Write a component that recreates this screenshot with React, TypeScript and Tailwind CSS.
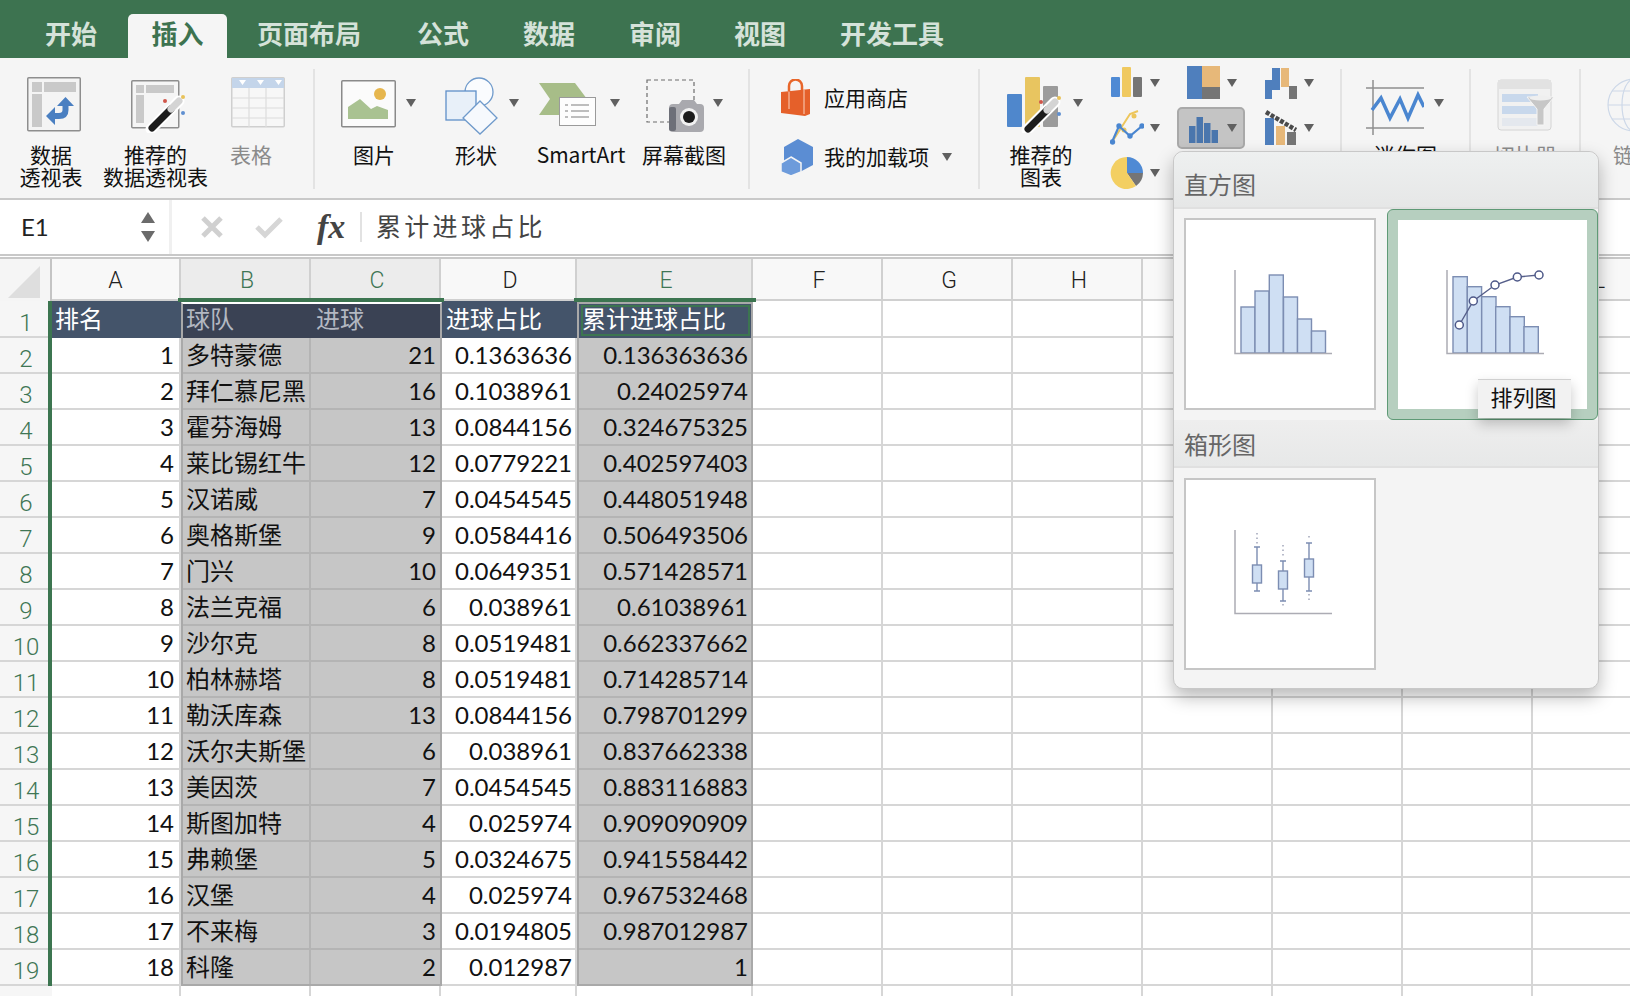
import React from "react";

// Excel for Mac: 插入 ribbon with the 直方图 chart menu open

const CJK = "font-['Noto_Sans_CJK_SC',sans-serif]";
const CELL_FONT = "font-['Lato','Noto_Sans_CJK_SC',sans-serif]";

const rows: [string, number, string, string][] = [
  ["多特蒙德", 21, "0.1363636", "0.136363636"],
  ["拜仁慕尼黑", 16, "0.1038961", "0.24025974"],
  ["霍芬海姆", 13, "0.0844156", "0.324675325"],
  ["莱比锡红牛", 12, "0.0779221", "0.402597403"],
  ["汉诺威", 7, "0.0454545", "0.448051948"],
  ["奥格斯堡", 9, "0.0584416", "0.506493506"],
  ["门兴", 10, "0.0649351", "0.571428571"],
  ["法兰克福", 6, "0.038961", "0.61038961"],
  ["沙尔克", 8, "0.0519481", "0.662337662"],
  ["柏林赫塔", 8, "0.0519481", "0.714285714"],
  ["勒沃库森", 13, "0.0844156", "0.798701299"],
  ["沃尔夫斯堡", 6, "0.038961", "0.837662338"],
  ["美因茨", 7, "0.0454545", "0.883116883"],
  ["斯图加特", 4, "0.025974", "0.909090909"],
  ["弗赖堡", 5, "0.0324675", "0.941558442"],
  ["汉堡", 4, "0.025974", "0.967532468"],
  ["不来梅", 3, "0.0194805", "0.987012987"],
  ["科隆", 2, "0.012987", "1"],
];

function Caret({ className = "" }: { className?: string }) {
  return (
    <svg width="10" height="8" viewBox="0 0 10 8" className={`shrink-0 ${className}`}>
      <path d="M0 0h10L5 8z" fill="#606060" />
    </svg>
  );
}

function Wand({ x, y }: { x: number; y: number }) {
  return (
    <g transform={`translate(${x} ${y})`}>
      <path d="M2 32 L30 4" stroke="#fff" strokeWidth="11" strokeLinecap="round" />
      <path d="M3 31 L22 12" stroke="#1d1d1d" strokeWidth="7" strokeLinecap="round" />
      <path d="M22 12 L30 4" stroke="#d4d4d4" strokeWidth="7" strokeLinecap="round" />
      <circle cx="16" cy="4" r="2" fill="#d0564a" />
      <circle cx="34" cy="0" r="2" fill="#e8c25a" />
      <circle cx="34" cy="16" r="2" fill="#5f8fd0" />
    </g>
  );
}

const PivotIcon = () => (
  <svg width="54" height="56" viewBox="0 0 54 56">
    <rect x="0.75" y="0.75" width="52.5" height="53" rx="1" fill="#f4f4f4" stroke="#8e8e8e" strokeWidth="1.5" />
    <rect x="5" y="5" width="10" height="10" fill="#c9c9c9" />
    <rect x="17" y="5" width="32" height="10" fill="#c9c9c9" />
    <rect x="5" y="17" width="10" height="33" fill="#c9c9c9" />
    <path d="M38.5 26V33Q38.5 39 32 39H26" fill="none" stroke="#4a7fc1" strokeWidth="6" />
    <path d="M30 29L38.5 20L47 29zM28 30L19 39L28 48z" fill="#4a7fc1" />
  </svg>
);

const RecPivotIcon = () => (
  <svg width="56" height="56" viewBox="0 0 56 56">
    <rect x="0.75" y="3.75" width="47" height="47" rx="1" fill="#f5f5f5" stroke="#8e8e8e" strokeWidth="1.5" />
    <rect x="5" y="8" width="8" height="8" fill="#c9c9c9" />
    <rect x="15" y="8" width="28" height="8" fill="#c9c9c9" />
    <rect x="5" y="18" width="8" height="28" fill="#c9c9c9" />
    <Wand x={18} y={20} />
  </svg>
);

const TableIcon = () => (
  <svg width="54" height="52" viewBox="0 0 54 52">
    <rect x="0.75" y="0.75" width="52.5" height="49" rx="1" fill="#f7f7f7" stroke="#cfcfcf" strokeWidth="1.5" />
    <rect x="1" y="1" width="52" height="10" fill="#c4d5ea" />
    <path d="M1 21H53M1 31H53M1 41H53M18 11V50M35 11V50" stroke="#dcdcdc" strokeWidth="1.2" />
    <path d="M8 3h7l-3.5 5zM26 3h7l-3.5 5zM44 3h7l-3.5 5z" fill="#fff" />
  </svg>
);

const PictureIcon = () => (
  <svg width="55" height="50" viewBox="0 0 55 50">
    <rect x="0.75" y="0.75" width="53.5" height="46" rx="1" fill="#fbfbfb" stroke="#8a8a8a" strokeWidth="1.5" />
    <circle cx="39" cy="14" r="6" fill="#e6b64e" />
    <path d="M7 39V27L19 19L30 29L36 26L47 30V39z" fill="#a9c291" />
  </svg>
);

const ShapeIcon = () => (
  <svg width="54" height="58" viewBox="0 0 54 58">
    <circle cx="34" cy="15" r="14" fill="#fafcfe" stroke="#6f9acb" strokeWidth="1.3" />
    <rect x="1" y="14" width="30" height="29" fill="#e8f0f9" stroke="#5f8fc8" strokeWidth="1.3" />
    <path d="M35 24L52 41L35 57L18 41z" fill="#f6f9fd" stroke="#6f9acb" strokeWidth="1.3" />
  </svg>
);

const SmartArtIcon = () => (
  <svg width="57" height="48" viewBox="0 0 57 48">
    <path d="M0 0H36L48 16L36 32H0L11 16z" fill="#a7bd88" />
    <rect x="20.5" y="14.5" width="36" height="28" fill="#fdfdfd" stroke="#9a9a9a" />
    <path d="M26 22h3M32 22h18M26 28h3M32 28h18M26 34h3M32 34h18" stroke="#a8a8a8" strokeWidth="1.6" />
  </svg>
);

const ScreenshotIcon = () => (
  <svg width="61" height="56" viewBox="0 0 61 56">
    <rect x="1" y="1" width="47" height="42" fill="none" stroke="#6d6d6d" strokeWidth="1.2" strokeDasharray="4 3" />
    <path d="M23 29q0-4 4-4h6l3-4h12l3 4h3q4 0 4 4v20q0 4-4 4H27q-4 0-4-4z" fill="#a9a9ae" />
    <rect x="23" y="28" width="7" height="24" rx="2" fill="#6d6f78" />
    <circle cx="43" cy="38" r="9" fill="#f1f1f1" />
    <circle cx="43" cy="38" r="6" fill="#1b1b1b" />
  </svg>
);

const StoreIcon = () => (
  <svg width="31" height="38" viewBox="0 0 31 38">
    <path d="M9 12V7a6.500 6.500 0 0 1 13 0v5" fill="none" stroke="#e8662a" strokeWidth="2.500" />
    <path d="M1 13L30 10V35L25 37L1 34z" fill="#e5602a" />
    <path d="M9 13V30M24 11V35" stroke="#fbd2bd" strokeWidth="1" />
  </svg>
);

const AddinIcon = () => (
  <svg width="34" height="37" viewBox="0 0 34 37">
    <path d="M18 0L33 8V26L18 34L4 26V8z" fill="#5b8dd3" />
    <path d="M11 18L21 24V33L11 37L1 33V24z" fill="#6d9bdb" stroke="#f5f5f5" strokeWidth="1.5" />
  </svg>
);

const RecChartIcon = () => (
  <svg width="60" height="56" viewBox="0 0 60 56">
    <rect x="0" y="17" width="15" height="33" rx="1" fill="#4f87cc" />
    <rect x="18" y="0" width="15" height="50" rx="1" fill="#e8c560" />
    <rect x="36" y="9" width="15" height="41" rx="1" fill="#9b9b9b" />
    <Wand x={18} y={21} />
  </svg>
);

const ColumnIcon = () => (
  <svg width="34" height="34" viewBox="0 0 34 34">
    <rect x="1" y="11" width="9" height="20" rx="1" fill="#4f8ad4" />
    <rect x="12" y="1" width="9" height="30" rx="1" fill="#f0c95f" />
    <rect x="23" y="11" width="9" height="20" rx="1" fill="#757575" />
  </svg>
);

const ScatterIcon = () => (
  <svg width="34" height="36" viewBox="0 0 34 36">
    <path d="M2 32L20 4L28 1" fill="none" stroke="#edc65c" strokeWidth="2" />
    <circle cx="14" cy="20" r="2.500" fill="#edc65c" />
    <circle cx="24" cy="6" r="2.500" fill="#edc65c" />
    <path d="M2 32L9 16L20 26L32 16" fill="none" stroke="#4a86d0" strokeWidth="2.200" />
    <circle cx="2.500" cy="32" r="2.700" fill="#4a86d0" />
    <circle cx="9" cy="16" r="2.700" fill="#4a86d0" />
    <circle cx="20" cy="26" r="2.700" fill="#4a86d0" />
    <circle cx="32" cy="16" r="2.700" fill="#4a86d0" />
  </svg>
);

const PieIcon = () => (
  <svg width="34" height="36" viewBox="0 0 34 36">
    <path d="M17 18V2A16 16 0 0 1 33 18z" fill="#4f8ad4" />
    <path d="M17 18H33A16 16 0 0 1 26 31z" fill="#757575" />
    <path d="M17 18L26 31A16 16 0 1 1 17 2z" fill="#f3cf62" />
  </svg>
);

const TreemapIcon = () => (
  <svg width="34" height="34" viewBox="0 0 34 34">
    <rect x="0" y="0" width="15" height="33" fill="#4f7fbd" />
    <rect x="15" y="0" width="18" height="21" fill="#e7b879" />
    <rect x="15" y="21" width="18" height="12" fill="#757575" />
  </svg>
);

const WaterfallIcon = () => (
  <svg width="34" height="34" viewBox="0 0 34 34">
    <rect x="1" y="14" width="7" height="19" fill="#4f7fbd" />
    <rect x="8" y="2" width="8" height="22" fill="#4f7fbd" />
    <rect x="17" y="2" width="8" height="19" fill="#e7b879" />
    <rect x="25" y="20" width="8" height="13" fill="#757575" />
  </svg>
);

const HistogramIcon = () => (
  <svg width="34" height="34" viewBox="0 0 34 34">
    <rect x="2" y="15" width="6.500" height="17" fill="#4a76ad" />
    <rect x="9.500" y="6" width="6.500" height="26" fill="#4a76ad" />
    <rect x="17" y="12" width="6.500" height="20" fill="#4a76ad" />
    <rect x="24.500" y="19" width="6.500" height="13" fill="#4a76ad" />
  </svg>
);

const ParetoIcon = () => (
  <svg width="34" height="36" viewBox="0 0 34 36">
    <rect x="1" y="8" width="9" height="27" fill="#4f7fbd" />
    <rect x="12" y="16" width="9" height="19" fill="#e7b879" />
    <rect x="23" y="22" width="9" height="13" fill="#757575" />
    <path d="M2 2L32 20" stroke="#4a4a4a" strokeWidth="4.500" strokeDasharray="4 1.500" />
  </svg>
);

const SparklineIcon = () => (
  <svg width="58" height="56" viewBox="0 0 58 56">
    <path d="M7 1V56M0 9H58M0 49H58" stroke="#8f8f8f" strokeWidth="1.500" />
    <path d="M6 31L15 19L24 39L34 20L42 39L52 16L58 28" fill="none" stroke="#4a86d0" strokeWidth="3.500" />
  </svg>
);

const SlicerIcon = () => (
  <svg width="58" height="54" viewBox="0 0 58 54">
    <rect x="1" y="1" width="53" height="50" rx="3" fill="#f1f1f1" stroke="#d4d4d4" />
    <rect x="1" y="1" width="53" height="9" fill="#e2e2e2" />
    <rect x="5" y="15" width="36" height="8" fill="#c8d8ec" />
    <rect x="5" y="27" width="36" height="8" fill="#c8d8ec" />
    <rect x="5" y="39" width="36" height="8" fill="#e4e8ee" />
    <path d="M30 18H57L47 30V46L40 46V30z" fill="#c7c7c7" stroke="#f5f5f5" />
    <ellipse cx="43.500" cy="19" rx="11" ry="2.500" fill="#efefef" />
  </svg>
);

const GlobeIcon = () => (
  <svg width="46" height="56" viewBox="0 0 46 56">
    <g fill="none" stroke="#cdd8e8" strokeWidth="1.200">
      <circle cx="28" cy="28" r="26" />
      <ellipse cx="28" cy="28" rx="12" ry="26" />
      <path d="M2 28H54M6 14H50M6 42H50" />
    </g>
  </svg>
);

function Tool({
  width,
  icon,
  caret,
  label,
  gray,
}: {
  width: string;
  icon: React.ReactNode;
  caret?: string;
  label: string[];
  gray?: boolean;
}) {
  return (
    <div className={`flex shrink-0 flex-col items-center pt-[19px] ${width}`}>
      <div className="flex h-[66px] w-full items-start">
        {icon}
        {caret && <Caret className={caret} />}
      </div>
      <div className={`whitespace-nowrap text-center text-[21px] leading-[22px] ${gray ? "text-[#8b8b8b]" : "text-[#111]"}`}>
        {label.map((l) => (
          <div key={l}>{l}</div>
        ))}
      </div>
    </div>
  );
}

function Sep() {
  return <div className="mt-[11px] h-[120px] w-[2px] shrink-0 bg-[#e3e3e3]" />;
}

function SmallBtn({ icon, selected }: { icon: React.ReactNode; selected?: boolean }) {
  return (
    <div
      className={`flex h-[42px] w-[68px] items-center rounded-[5px] border-2 pl-[8px] ${
        selected ? "border-[#a9a9a9] bg-[#c4c4c4]" : "border-transparent"
      }`}
    >
      {icon}
      <Caret className="ml-[6px]" />
    </div>
  );
}

function Ribbon() {
  return (
    <div className={`flex h-[142px] border-b-2 border-[#c9c9c9] bg-[#f5f5f5] ${CJK}`}>
      <Tool width="w-[102px]" icon={<div className="pl-[27px]"><PivotIcon /></div>} label={["数据", "透视表"]} />
      <Tool width="w-[107px]" icon={<div className="pl-[29px]"><RecPivotIcon /></div>} label={["推荐的", "数据透视表"]} />
      <Tool width="w-[84px]" icon={<div className="pl-[22px]"><TableIcon /></div>} label={["表格"]} gray />
      <div className="w-[20px] shrink-0" />
      <Sep />
      <Tool width="w-[118px]" icon={<div className="pl-[26px] pt-[3px]"><PictureIcon /></div>} caret="ml-[10px] mt-[22px]" label={["图片"]} />
      <Tool width="w-[86px]" icon={<div className="pl-[12px]"><ShapeIcon /></div>} caret="ml-[10px] mt-[22px]" label={["形状"]} />
      <Tool width="w-[124px]" icon={<div className="pl-[20px] pt-[6px]"><SmartArtIcon /></div>} caret="ml-[14px] mt-[22px]" label={["SmartArt"]} />
      <Tool width="w-[82px]" icon={<div className="pl-[3px] pt-[2px]"><ScreenshotIcon /></div>} caret="ml-[6px] mt-[22px]" label={["屏幕截图"]} />
      <div className="w-[23px] shrink-0" />
      <Sep />
      <div className="flex w-[228px] shrink-0 flex-col gap-[21px] pl-[30px] pt-[21px] text-[21px] text-[#111]">
        <div className="flex h-[38px] items-center">
          <div className="w-[44px]"><StoreIcon /></div>
          <span>应用商店</span>
        </div>
        <div className="flex h-[38px] items-center">
          <div className="w-[44px]"><AddinIcon /></div>
          <span>我的加载项</span>
          <Caret className="ml-[13px]" />
        </div>
      </div>
      <Sep />
      <Tool width="w-[122px]" icon={<div className="pl-[27px]"><RecChartIcon /></div>} caret="ml-[6px] mt-[22px]" label={["推荐的", "图表"]} />
      <div className="-ml-[2px] flex shrink-0 gap-[9px] pt-[4px]">
        <div className="flex flex-col gap-[3px]">
          <SmallBtn icon={<ColumnIcon />} />
          <SmallBtn icon={<ScatterIcon />} />
          <SmallBtn icon={<PieIcon />} />
        </div>
        <div className="flex flex-col gap-[3px]">
          <SmallBtn icon={<TreemapIcon />} />
          <SmallBtn icon={<HistogramIcon />} selected />
        </div>
        <div className="flex flex-col gap-[3px]">
          <SmallBtn icon={<WaterfallIcon />} />
          <SmallBtn icon={<ParetoIcon />} />
        </div>
      </div>
      <div className="w-[18px] shrink-0" />
      <Sep />
      <Tool width="w-[127px]" icon={<div className="pl-[24px] pt-[2px]"><SparklineIcon /></div>} caret="ml-[10px] mt-[22px]" label={["迷你图"]} />
      <Sep />
      <Tool width="w-[108px]" icon={<div className="pl-[26px] pt-[2px]"><SlicerIcon /></div>} label={["切片器"]} gray />
      <Sep />
      <Tool width="w-[106px]" icon={<div className="pl-[25px]"><GlobeIcon /></div>} label={["链接"]} gray />
    </div>
  );
}

function FormulaBar() {
  return (
    <div className="flex h-[54px] bg-[#f0f0f0]">
      <div className="flex w-[169px] items-center justify-between bg-white pl-[21px] pr-[14px]">
        <span className={`text-[24px] text-[#222] ${CELL_FONT}`}>E1</span>
        <div className="flex flex-col gap-[8px]">
          <svg width="14" height="11" viewBox="0 0 14 11"><path d="M7 0l7 11H0z" fill="#6b6b6b" /></svg>
          <svg width="14" height="11" viewBox="0 0 14 11"><path d="M0 0h14L7 11z" fill="#6b6b6b" /></svg>
        </div>
      </div>
      <div className="ml-[3px] flex flex-1 items-center bg-white pl-[28px]">
        <svg width="24" height="24" viewBox="0 0 24 24"><path d="M3 3L21 21M21 3L3 21" stroke="#d0d0d0" strokeWidth="5" /></svg>
        <svg width="30" height="24" viewBox="0 0 30 24" className="ml-[30px]"><path d="M3 12L11 20L27 4" fill="none" stroke="#d6d6d6" strokeWidth="5" /></svg>
        <span className="ml-[33px] w-[43px] font-['Liberation_Serif',serif] text-[34px] font-bold italic leading-[40px] text-[#444]">fx</span>
        <div className="h-[30px] w-[2px] bg-[#e2e2e2]" />
        <span className={`mb-[3px] ml-[14px] text-[25px] tracking-[3.300px] text-[#444] ${CJK}`}>累计进球占比</span>
      </div>
    </div>
  );
}

const LETTERS = ["A", "B", "C", "D", "E", "F", "G", "H", "I", "J", "K", "L"];
const GRID_COLS = "grid grid-cols-[52px_129px_130px_130px_136px_176px_130px_130px_130px_130px_130px_130px_130px]";
const LINE = "border-r-2 border-b-2 border-[#d6d6d6]";

function Sheet() {
  const selected = (i: number) => i === 1 || i === 2 || i === 4;
  return (
    <div className="relative">
      <div className={`${GRID_COLS} w-[1663px] ${CELL_FONT} text-[24px] text-[#111]`}>
        {/* column headers */}
        <div className="flex h-[42px] items-end justify-center border-r-2 border-[#c4c4c4] bg-[#f5f5f5] pb-[3px] pl-[2px] pr-[4px]">
          <svg width="32" height="32" viewBox="0 0 32 32"><path d="M32 0V32H0z" fill="#dedede" /></svg>
        </div>
        {LETTERS.map((l, i) => (
          <div
            key={l}
            className={`flex h-[42px] items-center justify-center border-r-2 border-b-2 border-[#d0d0d0] pt-[5px] font-['Roboto',sans-serif] text-[23px] font-light ${
              i === 0 ? "pl-0" : "pl-[4px]"
            } ${selected(i) ? "bg-[#ececec] text-[#3f7655]" : "bg-[#f8f8f8] text-[#222]"}`}
          >
            {l}
          </div>
        ))}

        {/* row 1 */}
        <RowNum n={1} />
        <div className="flex h-[37px] items-center bg-[#44546a] pb-[2px] pl-[3px] text-white">排名</div>
        <div className="flex h-[37px] items-center bg-[#3a4254] pb-[2px] pl-[5px] text-[#b3b8c2]">球队</div>
        <div className="flex h-[37px] items-center bg-[#3a4254] pb-[2px] pl-[5px] text-[#b3b8c2]">进球</div>
        <div className="flex h-[37px] items-center bg-[#44546a] pb-[2px] pl-[5px] text-white">进球占比</div>
        <div className="flex h-[37px] items-center bg-[#44546a] pb-[2px] pl-[5px] text-white">累计进球占比</div>
        {LETTERS.slice(5).map((l) => (
          <div key={l} className={`h-[37px] ${LINE}`} />
        ))}

        {/* data rows */}
        {rows.map(([team, goals, share, total], i) => (
          <React.Fragment key={team}>
            <RowNum n={i + 2} />
            <div className={`flex h-[36px] items-center justify-end pr-[5px] ${LINE}`}>{i + 1}</div>
            <div className="flex h-[36px] items-center whitespace-nowrap border-r-2 border-b-2 border-[#b4b4b4] bg-[#c6c6c6] pl-[5px]">{team}</div>
            <div className="flex h-[36px] items-center justify-end border-b-2 border-[#b4b4b4] bg-[#c6c6c6] pr-[5px]">{goals}</div>
            <div className={`flex h-[36px] items-center justify-end pr-[3px] ${LINE}`}>{share}</div>
            <div className="flex h-[36px] items-center justify-end border-b-2 border-[#b4b4b4] bg-[#c6c6c6] pr-[5px]">{total}</div>
            {LETTERS.slice(5).map((l) => (
              <div key={l} className={`h-[36px] ${LINE}`} />
            ))}
          </React.Fragment>
        ))}

        {/* partial row 20 */}
        <RowNum n={20} />
        {LETTERS.map((l) => (
          <div key={l} className={`h-[36px] ${LINE}`} />
        ))}
      </div>

      {/* selection outlines and header markers */}
      <div className="absolute left-[48px] top-[42px] h-[685px] w-[4px] bg-[#3c7550]" />
      <div className="absolute left-[178px] top-[39px] h-[4px] w-[266px] bg-[#3c7550]" />
      <div className="absolute left-[574px] top-[39px] h-[4px] w-[182px] bg-[#3c7550]" />
      <div className="absolute left-[181px] top-[43px] h-[684px] w-[261px] border-2 border-[#a9a9a9] border-t-white" />
      <div className="absolute left-[577px] top-[43px] h-[684px] w-[176px] border-2 border-[#a9a9a9]" />
      <div className="absolute left-[581px] top-[46px] h-[31px] w-[169px] border-2 border-[#3c7550]" />
    </div>
  );
}

function RowNum({ n }: { n: number }) {
  return (
    <div
      className={`flex items-center justify-center border-b-2 border-[#d6d6d6] bg-[#f6f6f6] pt-[8px] font-['Roboto',sans-serif] text-[24px] font-light leading-[26px] text-[#3f7655] ${
        n === 1 ? "h-[37px]" : "h-[36px]"
      }`}
    >
      {n}
    </div>
  );
}

function Thumb({ children }: { children: React.ReactNode }) {
  return <div className="h-[192px] w-[192px] shrink-0 border-2 border-[#c6c6c6] bg-white">{children}</div>;
}

const BAR = { fill: "#cfdff3", stroke: "#7c8db2", strokeWidth: 1.4 };

function HistogramThumb() {
  const xs = [55, 69, 83.300, 97.500, 111.500, 125.500];
  const tops = [87, 71, 55, 77, 99, 111];
  return (
    <svg width="188" height="188" viewBox="0 0 188 188">
      {xs.map((x, i) => (
        <rect key={x} x={x} y={tops[i]} width="14" height={133 - tops[i]} {...BAR} />
      ))}
      <path d="M49 50V133.500H146" fill="none" stroke="#acacb4" strokeWidth="1.500" />
    </svg>
  );
}

function ParetoThumb() {
  const xs = [55, 69.300, 83.700, 97.700, 112, 126];
  const tops = [56.700, 66.700, 76.700, 86.700, 96.700, 106.700];
  const pts = [[61.300, 105], [75.300, 81], [97, 65], [119.300, 57], [141, 55]];
  return (
    <svg width="188" height="188" viewBox="0 0 188 188">
      {xs.map((x, i) => (
        <rect key={x} x={x} y={tops[i]} width="14.300" height={133 - tops[i]} {...BAR} />
      ))}
      <path d="M49 50V133.500H146" fill="none" stroke="#acacb4" strokeWidth="1.500" />
      <path d="M61.300 105L75.300 81L97 65L119.300 57L141 55" fill="none" stroke="#565f8a" strokeWidth="1.400" />
      {pts.map(([x, y]) => (
        <circle key={x} cx={x} cy={y} r="4" fill="#fff" stroke="#4d5888" strokeWidth="1.500" />
      ))}
    </svg>
  );
}

function BoxThumb() {
  const boxes = [
    { x: 71, y1: 85, y2: 103, top: 67, bot: 111, dots: "M71 53V64" },
    { x: 97, y1: 91, y2: 109, top: 81, bot: 121, dots: "M97 65V77M97 124V128" },
    { x: 123, y1: 79, y2: 97, top: 63, bot: 111, dots: "M123 56V59M123 114V121" },
  ];
  return (
    <svg width="188" height="188" viewBox="0 0 188 188">
      <path d="M49 50V133.500H146" fill="none" stroke="#acacb4" strokeWidth="1.500" />
      {boxes.map((b) => (
        <g key={b.x}>
          <path d={b.dots} stroke="#9a9fb4" strokeWidth="1.400" strokeDasharray="1.500 3" />
          <path
            d={`M${b.x} ${b.top}V${b.bot}M${b.x - 3} ${b.top}H${b.x + 3}M${b.x - 3} ${b.bot}H${b.x + 3}`}
            stroke="#7c8db2"
            strokeWidth="1.400"
          />
          <rect x={b.x - 4.500} y={b.y1} width="9" height={b.y2 - b.y1} {...BAR} />
        </g>
      ))}
    </svg>
  );
}

function ChartMenu() {
  return (
    <div className={`absolute left-[1173px] top-[151px] z-10 flex h-[538px] w-[426px] flex-col overflow-visible rounded-[10px] border border-[#c8c8c8] bg-[#f4f4f4] shadow-[0_8px_18px_rgba(0,0,0,0.28)] ${CJK}`}>
      <div className="flex h-[57px] items-end rounded-t-[10px] border-b-2 border-[#e0e0e0] bg-gradient-to-b from-[#eef0f0] to-[#e6e7e7] pb-[7px] pl-[10px] text-[24px] leading-[32px] text-[#666]">
        直方图
      </div>
      <div className="relative flex h-[211px] items-start gap-[11px] pl-[10px]">
        <div className="mt-[9px]">
          <Thumb><HistogramThumb /></Thumb>
        </div>
        <div className="h-[211px] w-[211px] rounded-[6px] border border-[#5f9a76] bg-[#b6cfbf] p-[10px]">
          <div className="h-[189px] w-[189px] bg-white">
            <ParetoThumb />
          </div>
        </div>
        <div className="absolute left-[304px] top-[170px] flex h-[39px] w-[93px] items-center justify-center border-t border-[#d0d0d0] bg-[#f2f2f2] pb-[5px] pr-[2px] text-[22px] text-[#111] shadow-[0_6px_12px_rgba(0,0,0,0.22)]">
          排列图
        </div>
      </div>
      <div className="flex h-[48px] items-end border-b-2 border-[#e0e0e0] bg-gradient-to-b from-[#eeeeee] to-[#e7e8e8] pb-[6px] pl-[10px] text-[24px] leading-[32px] text-[#666]">
        箱形图
      </div>
      <div className="pl-[10px] pt-[10px]">
        <Thumb><BoxThumb /></Thumb>
      </div>
    </div>
  );
}

const TABS = [
  { t: "开始", c: "ml-[45px] mb-[3px]" },
  { t: "页面布局", c: "ml-[30px] mb-[3px]" },
  { t: "公式", c: "ml-[56px] mb-[3px]" },
  { t: "数据", c: "ml-[54px] mb-[3px]" },
  { t: "审阅", c: "ml-[54px] mb-[3px]" },
  { t: "视图", c: "ml-[53px] mb-[3px]" },
  { t: "开发工具", c: "ml-[54px] mb-[3px]" },
];

export default function App() {
  return (
    <div className={`relative h-[996px] w-[1630px] overflow-hidden bg-white ${CJK}`}>
      <div className="flex h-[58px] items-end bg-[#3d7350] text-[26px] font-bold leading-[44px] text-[#d5e2d9]">
        <span className={TABS[0].c}>{TABS[0].t}</span>
        <div className="ml-[31px] h-[44px] w-[99px] rounded-t-[5px] bg-[#f5f5f5] text-center leading-[38px] text-[#3d7350]">插入</div>
        {TABS.slice(1).map((tab) => (
          <span key={tab.t} className={tab.c}>{tab.t}</span>
        ))}
      </div>
      <Ribbon />
      <FormulaBar />
      <div className="h-[5px] border-y-2 border-[#c8c8c8] bg-white" />
      <Sheet />
      <ChartMenu />
    </div>
  );
}
